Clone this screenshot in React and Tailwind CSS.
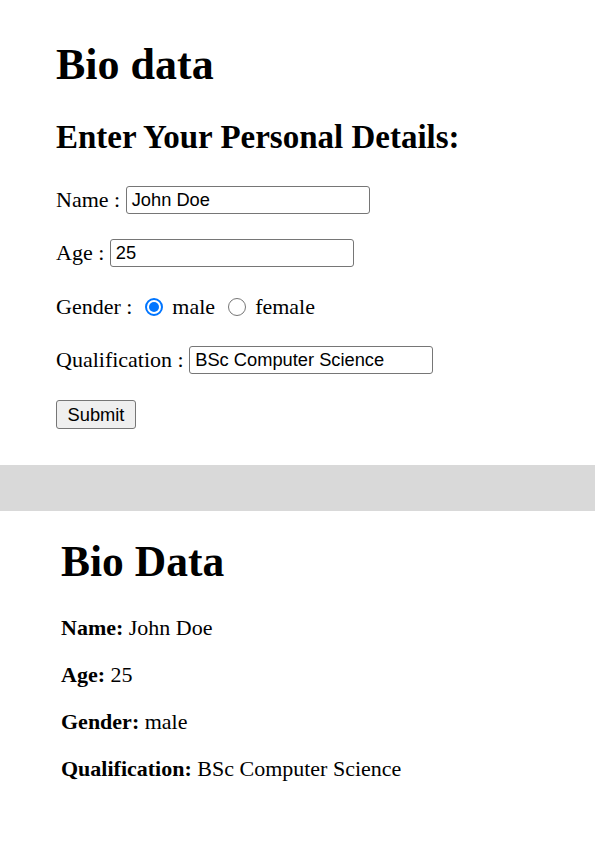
import React from 'react';

const serif = "font-['Liberation_Serif','Times_New_Roman',serif]";
const sans = "font-['Liberation_Sans',Arial,sans-serif]";

function TextBox({ value }) {
  return (
    <span
      className={`${sans} w-[244px] h-[28px] shrink-0 inline-flex items-center border border-[#767676] rounded-[3px] pl-[5px] text-[18.3px] text-black bg-white`}
    >
      {value}
    </span>
  );
}

function Radio({ checked }) {
  if (checked) {
    return (
      <span className="w-[18px] h-[18px] shrink-0 rounded-full border-2 border-[#0075ff] flex items-center justify-center bg-white">
        <span className="w-[10px] h-[10px] rounded-full bg-[#0075ff]" />
      </span>
    );
  }
  return <span className="block w-[18px] h-[18px] shrink-0 rounded-full border border-[#767676] bg-white" />;
}

function Row({ children }) {
  return (
    <div className="flex items-center h-[28px] text-[22px] leading-[28px] whitespace-pre">
      {children}
    </div>
  );
}

function Detail({ label, value }) {
  return (
    <p className="h-[28px] text-[22px] leading-[28px]">
      <b>{label}</b> {value}
    </p>
  );
}

export default function App() {
  return (
    <div className={`${serif} bg-white text-black w-[595px] min-h-[842px]`}>
      {/* form section */}
      <section className="h-[465px] pl-[56px] pt-[41px]">
        <h1 className="text-[44px] leading-[48px] font-bold">Bio data</h1>
        <h2 className="mt-[30px] text-[33px] leading-[36px] font-bold">Enter Your Personal Details:</h2>

        <div className="mt-[31px] flex flex-col gap-[25.4px]">
          <Row>
            <span>Name : </span>
            <TextBox value="John Doe" />
          </Row>
          <Row>
            <span>Age : </span>
            <TextBox value="25" />
          </Row>
          <Row>
            <span>Gender : </span>
            <span className="ml-[7px] mr-[4px]"><Radio checked /></span>
            <span> male </span>
            <span className="ml-[7px] mr-[4px]"><Radio /></span>
            <span> female</span>
          </Row>
          <Row>
            <span>Qualification : </span>
            <TextBox value="BSc Computer Science" />
          </Row>
          <div className="h-[29px] flex">
            <button
              type="button"
              className={`${sans} w-[80px] h-[29px] border border-[#767676] rounded-[3px] bg-[#efefef] text-[18.3px] text-black`}
            >
              Submit
            </button>
          </div>
        </div>
      </section>

      <div className="h-[46px] bg-[#d9d9d9]" />

      {/* result section */}
      <section className="pl-[61px] pt-[26px]">
        <h1 className="text-[43.5px] leading-[48px] font-bold">Bio Data</h1>
        <div className="mt-[29px] flex flex-col gap-[19px]">
          <Detail label="Name:" value="John Doe" />
          <Detail label="Age:" value="25" />
          <Detail label="Gender:" value="male" />
          <Detail label="Qualification:" value="BSc Computer Science" />
        </div>
      </section>
    </div>
  );
}
